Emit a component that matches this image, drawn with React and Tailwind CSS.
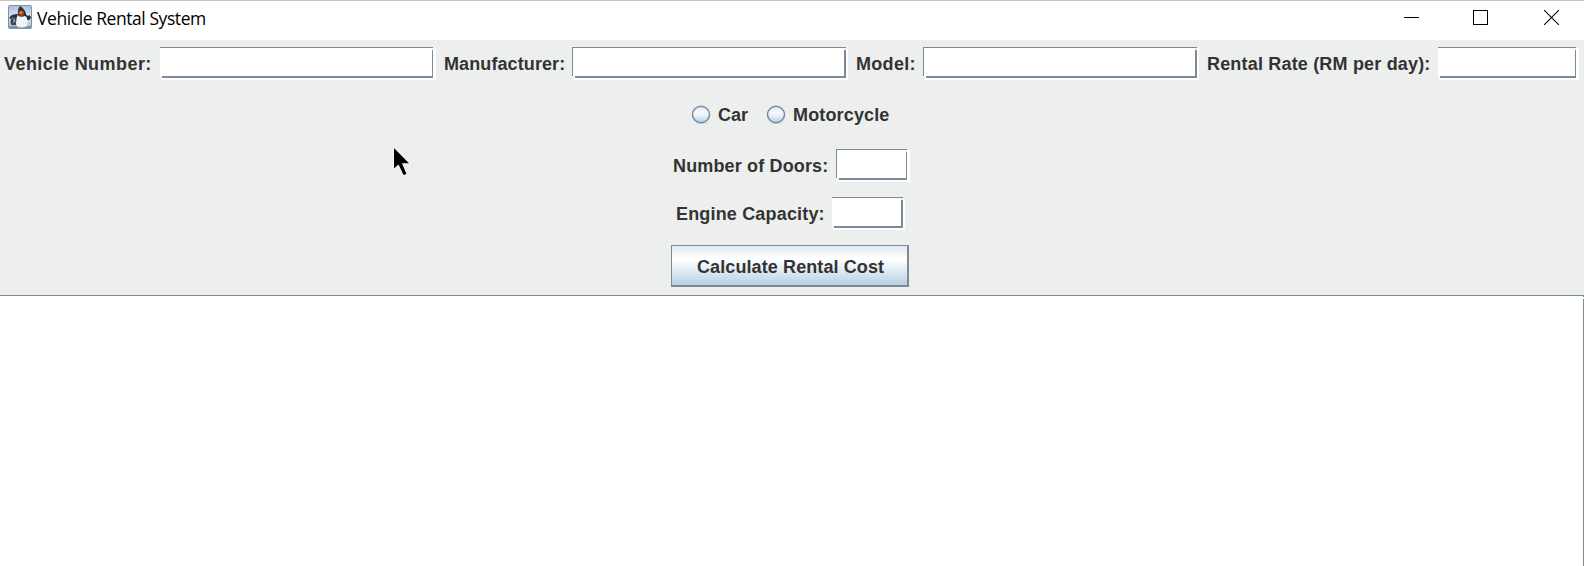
import React from "react";

const label = "whitespace-nowrap text-[18px] leading-[22px] font-bold text-[#333333]";

// Metal-style etched text field: thin top edge, heavier bottom edge and a white highlight.
function Field({ name, className, left = true, thick = false }) {
  return (
    <div role="textbox" aria-label={name} className={`flex h-[33px] shrink-0 flex-col ${className}`}>
      <div className={`h-px shrink-0 bg-[#7a8a99] ${thick ? "mr-[2px]" : "mr-[3px]"}`} />
      <div className="flex h-[28px] shrink-0">
        <div className={`w-px ${left ? "bg-[#7a8a99]" : "bg-white"}`} />
        <div className="flex-1 bg-white" />
        <div className={`mt-[2px] bg-[#7a8a99] ${thick ? "w-[2px]" : "w-px"}`} />
        <div className={`bg-white ${thick ? "mt-px w-[2px]" : "w-[3px]"}`} />
      </div>
      <div className={`flex h-[2px] shrink-0 ${left ? "ml-[2px]" : "ml-px"}`}>
        <div className="w-px bg-white" />
        <div className="flex-1 bg-[#7a8a99]" />
        <div className={`bg-white ${thick ? "w-[2px]" : "w-[3px]"}`} />
      </div>
      <div className={`h-[2px] shrink-0 bg-white ${left ? "ml-[2px]" : "ml-px"}`} />
    </div>
  );
}

function Radio({ id }) {
  return (
    <svg className="h-[20px] w-[20px] shrink-0" viewBox="0 0 20 20" role="radio" aria-checked="false">
      <defs>
        <linearGradient id={id} x1="0" y1="0" x2="0" y2="1">
          <stop offset="0" stopColor="#d8e5f1" />
          <stop offset="0.35" stopColor="#f4f8fb" />
          <stop offset="0.5" stopColor="#f0f5fa" />
          <stop offset="1" stopColor="#b8cfe5" />
        </linearGradient>
      </defs>
      <path d="M5 18.2H17" stroke="#c5d8ea" strokeWidth="1" />
      <ellipse cx="10" cy="9.5" rx="8.5" ry="8.2" fill={`url(#${id})`} stroke="#7a8a99" strokeWidth="1.5" />
    </svg>
  );
}

function JavaIcon() {
  return (
    <svg className="h-[24px] w-[24px] shrink-0" viewBox="0 0 24 24">
      <defs>
        <linearGradient id="tile" x1="0" y1="0" x2="0" y2="1">
          <stop offset="0" stopColor="#a9bfd9" />
          <stop offset="0.5" stopColor="#dfe8f1" />
          <stop offset="1" stopColor="#a3b2c6" />
        </linearGradient>
      </defs>
      <rect x="0.5" y="0.5" width="23" height="23" rx="1" fill="url(#tile)" stroke="#8191a6" />
      <path d="M1 21H23V23H1Z" fill="#8092a9" />
      <path d="M10 9Q6 8.5 3 10.5L1 13L2.5 14L5 12.5L8 15Z" fill="#2a3847" />
      <path d="M17 9Q20 12 21.5 10L23 12Q23 14 21 15L18 15Z" fill="#263443" />
      <path d="M3.5 13Q1.5 17 3.5 20H9L9 14Z" fill="#34475a" />
      <path d="M5 14.5L7 13.5L7.5 17L5 18Z" fill="#7e93a8" />
      <path d="M12 1Q9.5 4 10 9Q10 12 12 12L18.5 13Q18.5 6 14 2.5Z" fill="#2a2a30" />
      <path d="M10.5 11Q13 12.5 17 11L18.5 12Q20.5 17 19 21Q16 23 12 22.3Q8.5 22 8 19Q8 13 10.5 11Z" fill="#f1f3f6" />
      <ellipse cx="13.2" cy="8.2" rx="2.9" ry="2.9" fill="#8f4520" />
      <ellipse cx="13" cy="7.6" rx="1.5" ry="1.3" fill="#e1843f" />
    </svg>
  );
}

export default function App() {
  return (
    <div
      className="relative flex h-[566px] w-[1584px] flex-col overflow-hidden bg-[#ecefee]"
      style={{ fontFamily: '"Liberation Sans", Arial, sans-serif' }}
    >
      <header className="flex h-[40px] shrink-0 items-start border-t border-[#c5c5c5] bg-white text-black">
        <div className="mt-[4px] ml-[8px]">
          <JavaIcon />
        </div>
        <h1 className="mt-[5px] ml-[5px] flex-1 font-['Open_Sans',sans-serif] text-[17.5px] leading-[24px] tracking-[-0.43px] whitespace-nowrap">
          Vehicle Rental System
        </h1>
        <svg className="mt-[9px] mr-[54px] h-[15px] w-[15px]" viewBox="0 0 15 15">
          <path d="M0 7.5H15" stroke="#000" />
        </svg>
        <svg className="mt-[9px] mr-[56px] h-[15px] w-[15px]" viewBox="0 0 15 15">
          <rect x="0.5" y="0.5" width="14" height="14" fill="none" stroke="#000" />
        </svg>
        <svg className="mt-[9px] mr-[25px] h-[15px] w-[15px]" viewBox="0 0 15 15">
          <path d="M0 0L15 15M15 0L0 15" stroke="#000" strokeWidth="1.1" />
        </svg>
      </header>

      <main className="flex h-[255px] shrink-0 flex-col pt-[7px]">
        <div className="flex h-[33px] shrink-0 items-center">
          <span className={`${label} ml-[4px] w-[156px] tracking-[0.45px]`}>Vehicle Number:</span>
          <Field name="Vehicle Number" className="w-[276px]" left={false} />
          <span className={`${label} ml-[8px] w-[128px] tracking-[0.1px]`}>Manufacturer:</span>
          <Field name="Manufacturer" className="w-[276px]" thick />
          <span className={`${label} ml-[8px] w-[67px] tracking-[0.3px]`}>Model:</span>
          <Field name="Model" className="w-[276px]" thick />
          <span className={`${label} ml-[8px] w-[231px] tracking-[0.18px]`}>Rental Rate (RM per day):</span>
          <Field name="Rental Rate" className="w-[141px]" left={false} />
        </div>

        <div className="mt-[25px] ml-[691px] flex h-[20px] shrink-0 items-center">
          <Radio id="car-radio" />
          <span className={`${label} ml-[7px] w-[48px]`}>Car</span>
          <Radio id="motorcycle-radio" />
          <span className={`${label} ml-[7px] tracking-[0.15px]`}>Motorcycle</span>
        </div>

        <div className="mt-[24px] ml-[673px] flex h-[33px] shrink-0 items-center">
          <span className={`${label} w-[163px] tracking-[0.15px]`}>Number of Doors:</span>
          <Field name="Number of Doors" className="w-[74px]" />
        </div>

        <div className="mt-[15px] ml-[676px] flex h-[33px] shrink-0 items-center">
          <span className={`${label} w-[156px] tracking-[0.17px]`}>Engine Capacity:</span>
          <Field name="Engine Capacity" className="w-[73px]" left={false} thick />
        </div>

        <button
          type="button"
          className={`${label} mt-[15px] ml-[671px] flex h-[42px] w-[238px] shrink-0 items-center border-t border-r-2 border-b-2 border-l border-[#7a8a99] bg-[linear-gradient(to_bottom,#dde8f3_0%,#ffffff_30%,#ffffff_35%,#b8cfe5_100%)] pt-[3px] pl-[25px] tracking-[0.1px]`}
        >
          Calculate Rental Cost
        </button>
      </main>

      <section className="flex flex-1 flex-col items-end border-t border-[#7a8a99] bg-white">
        <div className="h-px w-px bg-[#7a8a99]" />
        <div className="mt-[2px] w-px flex-1 bg-[#7a8a99]" />
      </section>

      <svg className="absolute top-[145px] left-[391px] h-[34px] w-[24px]" viewBox="0 0 24 34">
        <path
          d="M3 3V23.5L7.5 19.5L12.5 30L15.5 29L11 18.2H18Z"
          fill="#000"
          stroke="#fff"
          strokeWidth="1.2"
          paintOrder="stroke"
        />
      </svg>
    </div>
  );
}
